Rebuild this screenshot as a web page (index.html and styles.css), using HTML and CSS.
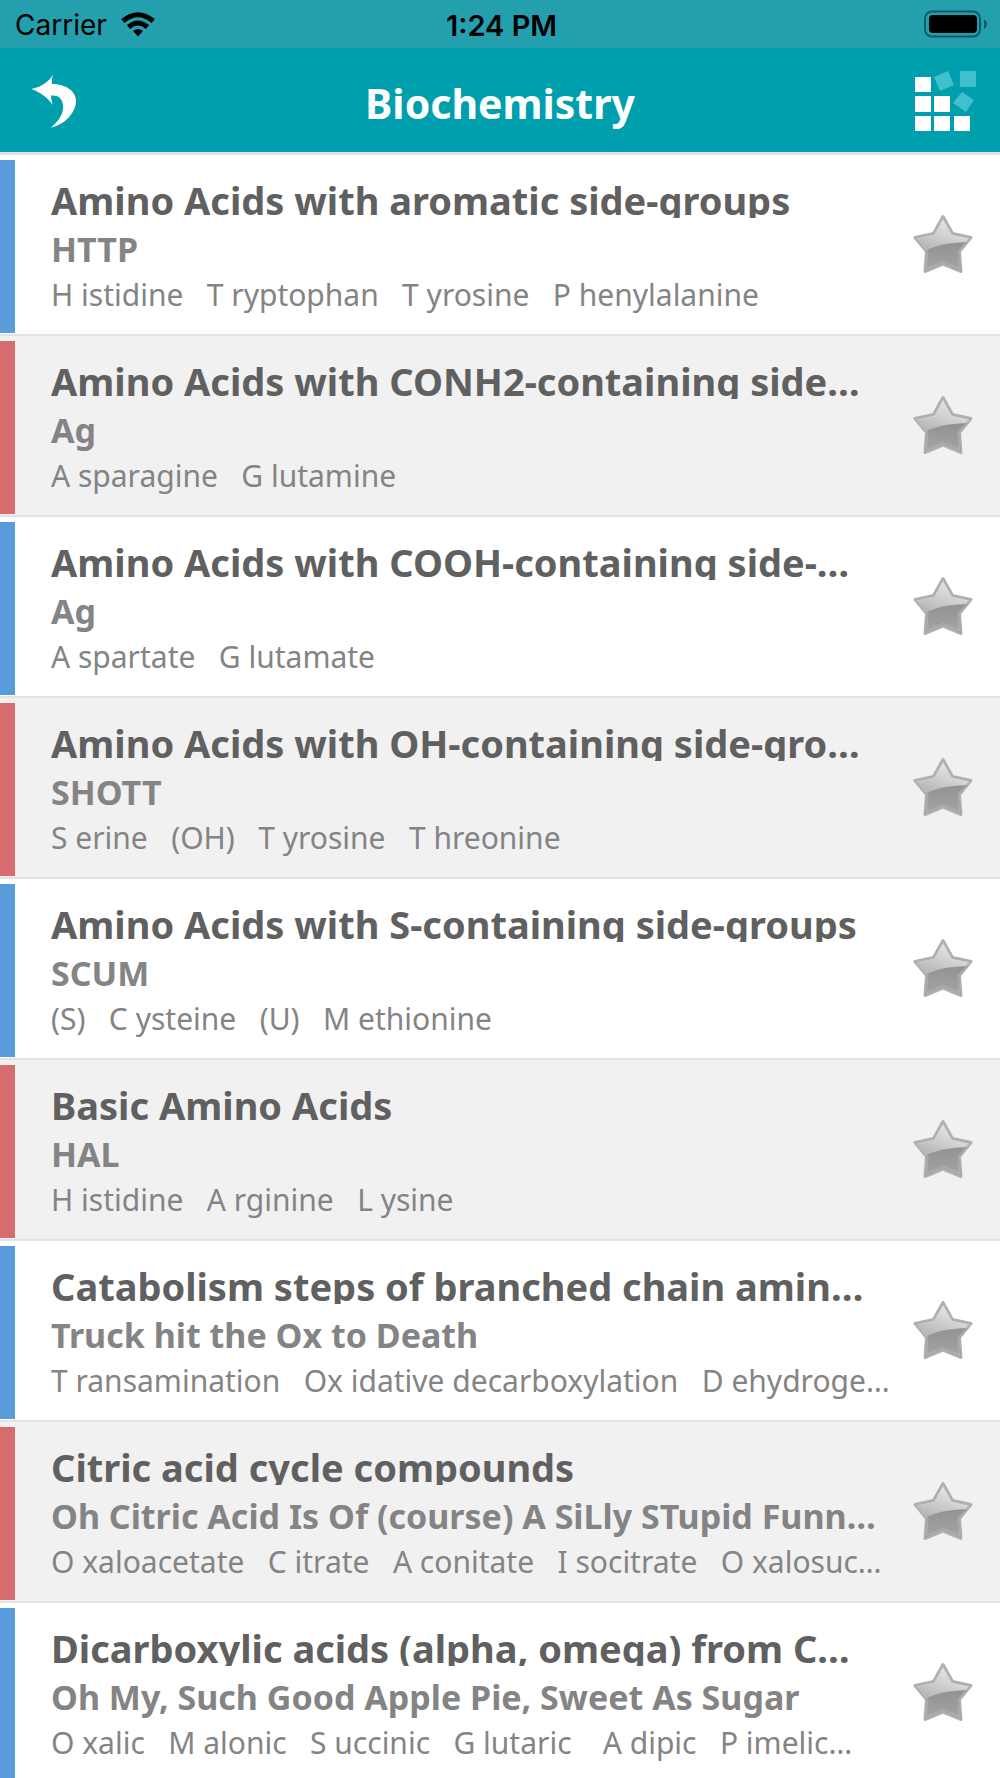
FILE: index.html
```html
<!DOCTYPE html>
<html lang="en">
<head>
<meta charset="utf-8">
<meta name="viewport" content="width=device-width, initial-scale=1">
<title>Biochemistry</title>
<link rel="stylesheet" href="styles.css">
</head>
<body>
<svg class="defs" width="0" height="0" aria-hidden="true">
  <defs>
    <linearGradient id="shine" x1="0.6" y1="0" x2="0.3" y2="0.8">
      <stop offset="0" stop-color="#ececec"/>
      <stop offset="1" stop-color="#a9a9a9"/>
    </linearGradient>
    <linearGradient id="shade" x1="0" y1="0" x2="0" y2="1">
      <stop offset="0" stop-color="#929292"/>
      <stop offset="1" stop-color="#a6a6a6"/>
    </linearGradient>
    <clipPath id="star-clip">
      <path d="M30 3L39 20L58 24L46 37L48 57L30 49L12 57L14 37L2 24L21 20Z"/>
    </clipPath>
    <symbol id="star" viewBox="0 0 60 60">
      <path d="M30 2.500L39.500 19.500L58 23.500L46.500 37.500L48 57.500L30 50L12 57.500L13.500 37.500L2 23.500L20.500 19.500Z" fill="url(#shine)" stroke="#b0b0b0" stroke-width="3" stroke-linejoin="round"/>
      <path d="M10 38Q26 28 58 28V60H10Z" fill="url(#shade)" clip-path="url(#star-clip)"/>
      <path d="M30 5L38.500 21L56 25L45 37L46.500 54.500L30 47.500L13.500 54.500L15 37L4 25L21.500 21Z" fill="none" stroke="#fff" stroke-opacity="0.2" stroke-linejoin="round"/>
    </symbol>
  </defs>
</svg>

<header class="top">
  <div class="status">
    <div class="carrier">
      <span>Carrier</span>
      <svg width="34" height="25" viewBox="0 0 34 25" aria-hidden="true">
        <g fill="none" stroke="#000" stroke-width="5">
          <path d="M1.800 9Q17 -3.500 32.200 9"/>
          <path d="M7.500 15Q17 7 26.500 15"/>
        </g>
        <path d="M12 19Q17 15 22 19L17 24.500Z"/>
      </svg>
    </div>
    <time>1:24 PM</time>
    <svg class="battery" width="64" height="28" viewBox="0 0 64 28" aria-hidden="true">
      <rect x="1" y="1.500" width="55" height="25" rx="7" fill="none" stroke="#0d5c66" stroke-width="2"/>
      <rect x="5" y="5" width="48" height="18" rx="4"/>
      <path d="M60 9Q66 14 60 19Z" fill="#0d5c66"/>
    </svg>
  </div>
  <nav class="bar">
    <button class="icon" type="button" aria-label="Back">
      <svg width="46" height="54" viewBox="0 0 46 54" aria-hidden="true">
        <path d="M0.500 15C10 13 18 8 22 0.500C21 4 20.500 7 21 10C33 10 45 16 45 27C45 38 34 51 20 53.500C28 47 33 39 32 31C31 24 27 21 20 21.500C20 24 20.500 27 22 31C16 23 9 18 0.500 15Z" fill="#fff"/>
      </svg>
    </button>
    <h1>Biochemistry</h1>
    <button class="icon" type="button" aria-label="Categories">
      <svg width="62" height="62" viewBox="0 0 62 62" aria-hidden="true">
        <g fill="#fff">
          <rect x="1" y="7" width="16" height="15"/>
          <rect x="1" y="26" width="16" height="16"/>
          <rect x="20" y="26" width="16" height="16"/>
          <rect x="1" y="46" width="16" height="15"/>
          <rect x="20" y="46" width="16" height="15"/>
          <rect x="40" y="46" width="16" height="15"/>
        </g>
        <g fill="#40bfcd">
          <rect x="46" y="1" width="16" height="16"/>
          <path d="M20 7L34 1L40 15L26 21Z"/>
          <path d="M48 22L60 30L52 42L39 33Z"/>
        </g>
      </svg>
    </button>
  </nav>
</header>

<main>
  <ul class="list">
    <li class="row">
      <div class="text">
        <h2>Amino Acids with aromatic side-groups</h2>
        <p class="mnemonic">HTTP</p>
        <p class="detail">H istidine   T ryptophan   T yrosine   P henylalanine</p>
      </div>
      <button class="star" type="button" aria-label="Favourite"><svg width="60" height="60"><use href="#star"/></svg></button>
    </li>
    <li class="row">
      <div class="text">
        <h2>Amino Acids with CONH2-containing side…</h2>
        <p class="mnemonic">Ag</p>
        <p class="detail">A sparagine   G lutamine</p>
      </div>
      <button class="star" type="button" aria-label="Favourite"><svg width="60" height="60"><use href="#star"/></svg></button>
    </li>
    <li class="row">
      <div class="text">
        <h2>Amino Acids with COOH-containing side-…</h2>
        <p class="mnemonic">Ag</p>
        <p class="detail">A spartate   G lutamate</p>
      </div>
      <button class="star" type="button" aria-label="Favourite"><svg width="60" height="60"><use href="#star"/></svg></button>
    </li>
    <li class="row">
      <div class="text">
        <h2>Amino Acids with OH-containing side-gro…</h2>
        <p class="mnemonic">SHOTT</p>
        <p class="detail">S erine   (OH)   T yrosine   T hreonine</p>
      </div>
      <button class="star" type="button" aria-label="Favourite"><svg width="60" height="60"><use href="#star"/></svg></button>
    </li>
    <li class="row">
      <div class="text">
        <h2>Amino Acids with S-containing side-groups</h2>
        <p class="mnemonic">SCUM</p>
        <p class="detail">(S)   C ysteine   (U)   M ethionine</p>
      </div>
      <button class="star" type="button" aria-label="Favourite"><svg width="60" height="60"><use href="#star"/></svg></button>
    </li>
    <li class="row">
      <div class="text">
        <h2>Basic Amino Acids</h2>
        <p class="mnemonic">HAL</p>
        <p class="detail">H istidine   A rginine   L ysine</p>
      </div>
      <button class="star" type="button" aria-label="Favourite"><svg width="60" height="60"><use href="#star"/></svg></button>
    </li>
    <li class="row">
      <div class="text">
        <h2>Catabolism steps of branched chain amin…</h2>
        <p class="mnemonic">Truck hit the Ox to Death</p>
        <p class="detail">T ransamination   Ox idative decarboxylation   D ehydroge…</p>
      </div>
      <button class="star" type="button" aria-label="Favourite"><svg width="60" height="60"><use href="#star"/></svg></button>
    </li>
    <li class="row">
      <div class="text">
        <h2>Citric acid cycle compounds</h2>
        <p class="mnemonic">Oh Citric Acid Is Of (course) A SiLly STupid Funn…</p>
        <p class="detail">O xaloacetate   C itrate   A conitate   I socitrate   O xalosuc…</p>
      </div>
      <button class="star" type="button" aria-label="Favourite"><svg width="60" height="60"><use href="#star"/></svg></button>
    </li>
    <li class="row">
      <div class="text">
        <h2>Dicarboxylic acids (alpha, omega) from C…</h2>
        <p class="mnemonic">Oh My, Such Good Apple Pie, Sweet As Sugar</p>
        <p class="detail">O xalic   M alonic   S uccinic   G lutaric    A dipic   P imelic…</p>
      </div>
      <button class="star" type="button" aria-label="Favourite"><svg width="60" height="60"><use href="#star"/></svg></button>
    </li>
  </ul>
</main>
</body>
</html>
```
FILE: styles.css
```css
* {
  box-sizing: border-box;
}

html {
  height: 100%;
}

body {
  height: 100%;
  margin: 0;
  overflow: hidden;
  background: #fff;
  font-family: "Noto Sans", "Open Sans", sans-serif;
}

h1,
h2,
p,
ul {
  margin: 0;
  padding: 0;
}

button {
  display: flex;
  padding: 0;
  border: 0;
  background: none;
}

.defs {
  display: block;
  position: absolute;
}

.top {
  border-bottom: 3px solid #e2e2e2;
  background: #009fae;
}

.status {
  display: grid;
  grid-template-columns: 1fr auto 1fr;
  align-items: center;
  height: 48px;
  padding: 2px 12px 0 15px;
  background: #249fae;
  font-family: Inter, sans-serif;
  font-size: 28px;
}

.carrier {
  display: flex;
  align-items: center;
  gap: 14px;
}

.carrier svg {
  margin-bottom: 2px;
}

.status time {
  font-size: 29px;
  font-weight: 600;
}

.battery {
  justify-self: end;
  margin-bottom: 2px;
}

.bar {
  display: grid;
  grid-template-columns: 1fr auto 1fr;
  align-items: center;
  height: 104px;
  padding: 2px 24px 0;
}

.bar .icon:first-child {
  margin-left: 7px;
}

.bar .icon:last-child {
  justify-self: end;
}

.bar h1 {
  padding-top: 4px;
  color: #fff;
  font-size: 41px;
  line-height: 56px;
}

.list {
  list-style: none;
}

.row {
  display: flex;
  align-items: center;
  height: 181px;
  padding-right: 27px;
  border-bottom: 2px solid #e3e3e3;
  background: #fff;
}

.row::before {
  content: "";
  align-self: stretch;
  flex: 0 0 15px;
  margin: 5px 36px 1px 0;
  background: #589cda;
}

.row:nth-child(even) {
  background: #f1f1f1;
}

.row:nth-child(even)::before {
  background: #d66c6e;
}

.text {
  flex: 1;
  align-self: flex-start;
  min-width: 0;
  padding-top: 19px;
}

.text h2,
.text p {
  white-space: pre;
}

.text h2 {
  height: 44px;
  overflow: hidden;
  color: #606060;
  font-size: 38px;
  line-height: 53px;
}

.mnemonic {
  margin-top: 6px;
  color: #848484;
  font-size: 34px;
  font-weight: 700;
  line-height: 50px;
}

.detail {
  height: 39px;
  overflow: hidden;
  color: #848484;
  font-size: 30px;
  line-height: 41px;
}

.star {
  margin-bottom: 2px;
}
```
